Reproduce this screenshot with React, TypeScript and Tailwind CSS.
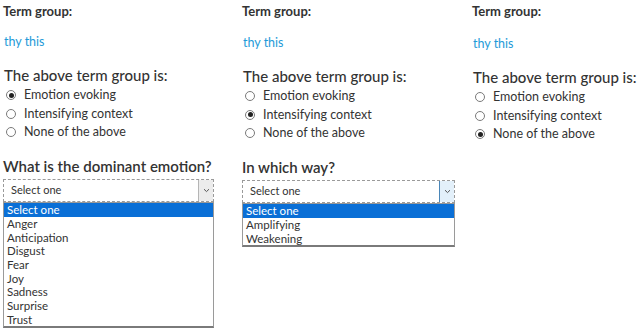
import React from "react";

const font = { fontFamily: "Lato, 'Open Sans', sans-serif" };

function Radio({ checked, label }: { checked: boolean; label: string }) {
  return (
    <div className="flex items-center h-[18.5px]">
      <span className="ml-[3px] w-[10px] h-[10px] rounded-full border border-[#7a7a7a] bg-white flex items-center justify-center">
        {checked && <span className="w-[5px] h-[5px] rounded-full bg-[#222]" />}
      </span>
      <span className="ml-[8px] text-[12.5px] text-[#333] leading-none">{label}</span>
    </div>
  );
}

function Chevron() {
  return (
    <svg width="7" height="5" viewBox="0 0 7 5">
      <path d="M1 1.2 L3.5 3.6 L6 1.2" fill="none" stroke="#555" strokeWidth="1" />
    </svg>
  );
}

function Select({ focused, options }: { focused: boolean; options: string[] }) {
  return (
    <div className="mt-[3px]">
      <div className="h-[23px] flex border border-dashed border-[#9a9a9a] bg-white">
        <div className="flex-1 flex items-center pl-[7px] text-[11px] text-[#333]">Select one</div>
        <div
          className={
            focused
              ? "w-[15px] flex items-center justify-center bg-[#e3f0fa] border-l border-[#4a86b8]"
              : "w-[15px] flex items-center justify-center bg-[#ececec] border-l border-[#b5b5b5]"
          }
        >
          <Chevron />
        </div>
      </div>
      <div className="border border-[#9a9a9a] border-b-2 border-b-[#7a7a7a] bg-white">
        {options.map((o, i) => (
          <div
            key={o}
            className={
              i === 0
                ? "h-[13.7px] flex items-center pl-[3px] text-[11.5px] bg-[#0a6fd6] text-white"
                : "h-[13.7px] flex items-center pl-[3px] text-[11.5px] text-[#333]"
            }
          >
            {o}
          </div>
        ))}
      </div>
    </div>
  );
}

function Column({
  checked,
  question,
  options,
  focused,
  width,
  shift,
}: {
  checked: number;
  question?: string;
  options?: string[];
  focused?: boolean;
  width: string;
  shift: string;
}) {
  const labels = ["Emotion evoking", "Intensifying context", "None of the above"];
  return (
    <div className={width}>
      <div className="h-[24px] flex items-center text-[13px] font-bold text-[#333]">Term group:</div>
      <div className={shift}>
        <div className="mt-[8px] h-[18px] flex items-center pl-[1px] text-[12.5px] text-[#1e9ad8]">thy this</div>
        <div className="mt-[14px] h-[20px] flex items-center pl-[1px] text-[15px] font-medium text-[#333]">
          The above term group is:
        </div>
        <div className="mt-[1px]">
          {labels.map((l, i) => (
            <Radio key={l} checked={i === checked} label={l} />
          ))}
        </div>
        {question && (
          <>
            <div className="mt-[14.5px] h-[20px] flex items-center text-[15px] font-semibold text-[#333]">
              {question}
            </div>
            <Select focused={!!focused} options={options!} />
          </>
        )}
      </div>
    </div>
  );
}

export default function App() {
  return (
    <div className="w-[640px] h-[329px] bg-white overflow-hidden flex pl-[3px]" style={font}>
      <Column
        width="w-[211px]"
        shift="pt-[1px]"
        checked={0}
        question="What is the dominant emotion?"
        options={["Select one", "Anger", "Anticipation", "Disgust", "Fear", "Joy", "Sadness", "Surprise", "Trust"]}
      />
      <div className="w-[28px]" />
      <Column
        width="w-[213px]"
        shift="pt-[2px]"
        checked={1}
        question="In which way?"
        options={["Select one", "Amplifying", "Weakening"]}
        focused
      />
      <div className="w-[17px]" />
      <Column width="w-[168px]" shift="pt-[3px]" checked={2} />
    </div>
  );
}
